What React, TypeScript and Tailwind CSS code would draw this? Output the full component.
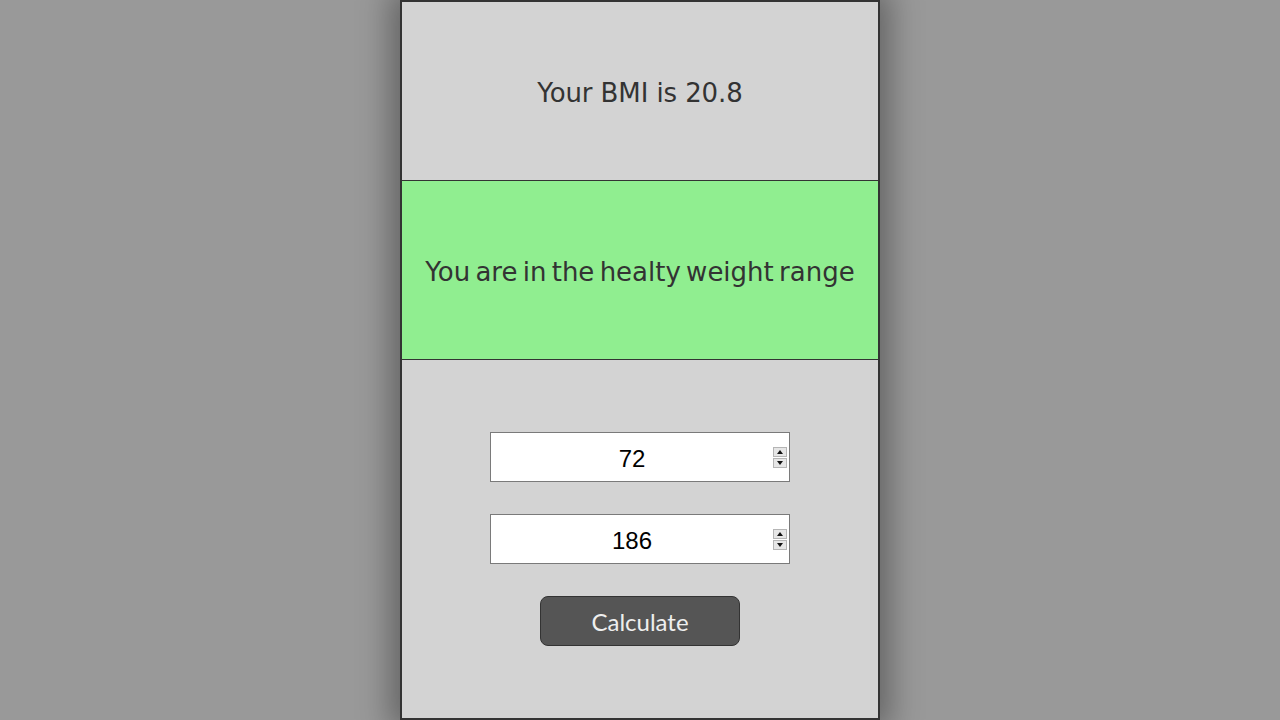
import React from "react";

function Spinner() {
  return (
    <div className="flex flex-col gap-[1px] mr-[1px]">
      <div className="w-[14px] h-[10px] bg-[#e6e6e6] border border-[#b5b5b5] flex items-center justify-center">
        <svg width="6" height="4" viewBox="0 0 6 4"><path d="M0 4 L3 0 L6 4 Z" fill="#111" /></svg>
      </div>
      <div className="w-[14px] h-[10px] bg-[#e6e6e6] border border-[#b5b5b5] flex items-center justify-center">
        <svg width="6" height="4" viewBox="0 0 6 4"><path d="M0 0 L3 4 L6 0 Z" fill="#111" /></svg>
      </div>
    </div>
  );
}

function NumBox({ value }: { value: string }) {
  return (
    <div className="w-[300px] h-[50px] bg-white border border-[#7a7a7a] flex items-center pr-[1px]">
      <div className="flex-1 text-center text-[24px] text-black pt-[4px] font-['Liberation_Sans',Arial,sans-serif]">
        {value}
      </div>
      <Spinner />
    </div>
  );
}

export default function App() {
  return (
    <div
      className="w-[1280px] h-[720px] bg-[#999999] flex justify-center overflow-hidden"
      style={{ fontFamily: "'DejaVu Sans', Verdana, sans-serif" }}
    >
      <div className="w-[480px] h-[720px] border-2 border-[#333333] bg-[#d3d3d3] flex flex-col shadow-[0_0_30px_10px_rgba(0,0,0,0.35)]">
        <div className="h-[178px] flex items-center justify-center pt-[4px] text-[26px] text-[#333333] tracking-[-0.1px]">
          Your BMI is 20.8
        </div>
        <div className="h-[180px] bg-[#90ee90] border-y border-[#333333] flex items-center justify-center pt-[4px] text-[26px] text-[#333333] [word-spacing:-3px]">
          You are in the healty weight range
        </div>
        <div className="flex-1 flex flex-col items-center pt-[72px] gap-[32px]">
          <NumBox value="72" />
          <NumBox value="186" />
          <button className="w-[200px] h-[50px] rounded-[8px] bg-[#555555] border border-[#333333] text-[#eeeeee] text-[24px] pt-[2px] font-['Lato',sans-serif]">
            Calculate
          </button>
        </div>
      </div>
    </div>
  );
}
